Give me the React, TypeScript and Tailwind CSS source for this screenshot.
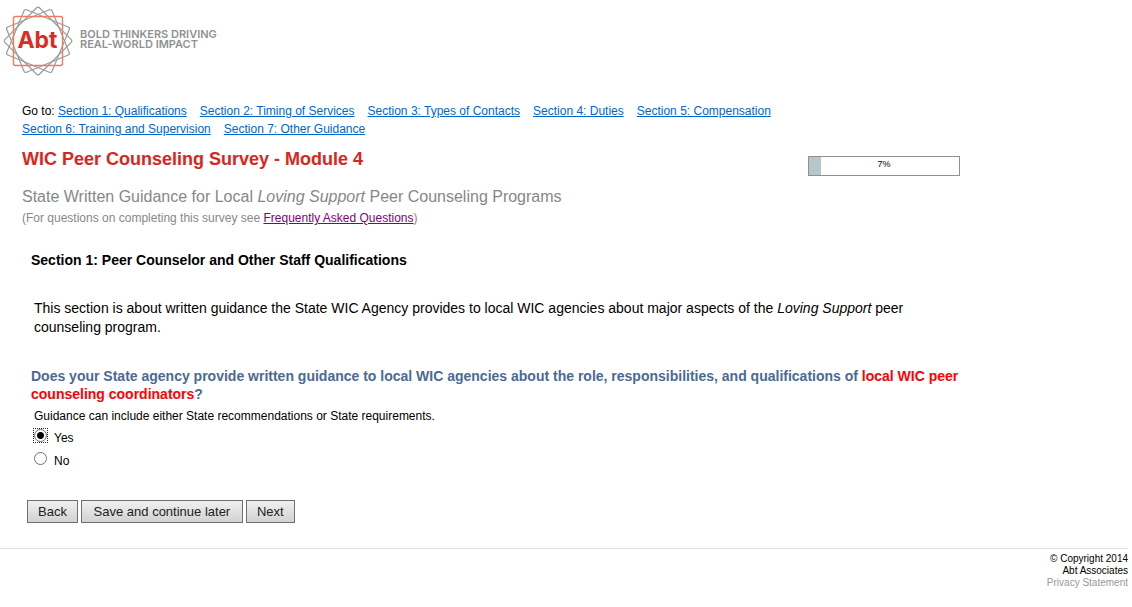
import { useState } from "react";

const sections = [
  "Section 1: Qualifications",
  "Section 2: Timing of Services",
  "Section 3: Types of Contacts",
  "Section 4: Duties",
  "Section 5: Compensation",
  "Section 6: Training and Supervision",
  "Section 7: Other Guidance",
];

function Logo() {
  return (
    <svg width="220" height="80" viewBox="0 0 220 80" role="img" aria-label="Abt: Bold thinkers driving real-world impact">
      <g fill="none" stroke="#9a9d9d" strokeWidth="1.2">
        <rect x="13.5" y="16.5" width="49" height="49" rx="2" transform="rotate(22.5 38 41)" />
        <rect x="13.5" y="16.5" width="49" height="49" rx="2" transform="rotate(45 38 41)" />
        <rect x="13.5" y="16.5" width="49" height="49" rx="2" transform="rotate(67.5 38 41)" />
      </g>
      <rect x="13.5" y="16.5" width="49" height="49" rx="2" fill="none" stroke="#ee7c60" strokeWidth="1.4" />
      <text x="37.5" y="48" textAnchor="middle" fill="#dc2b23" className="font-[Inter,sans-serif] text-[23px] font-bold">Abt</text>
      <g fill="#8f9292" className="font-[Inter,sans-serif] text-[11px] font-semibold">
        <text x="80" y="38">BOLD THINKERS DRIVING</text>
        <text x="80" y="48">REAL-WORLD IMPACT</text>
      </g>
    </svg>
  );
}

function Choice({ label, value, onSelect }: { label: string; value: string; onSelect: (v: string) => void }) {
  const checked = label === value;
  return (
    <label className="flex h-[23px] items-start">
      <span className={"flex size-[15px] shrink-0 items-center justify-center border border-dotted " + (checked ? "border-[#223]" : "border-transparent")}>
        <input
          type="radio"
          name="guidance"
          checked={checked}
          onChange={() => onSelect(label)}
          className={
            "size-[13px] shrink-0 appearance-none rounded-full border border-[#707070] outline-none " +
            (checked ? "bg-[radial-gradient(circle,#000_0_3px,#fff_4px)]" : "bg-white")
          }
        />
      </span>
      <span className="pt-px pl-[6px] text-xs leading-[18px]">{label}</span>
    </label>
  );
}

function FormButton({ children }: { children: string }) {
  return (
    <button
      type="button"
      className="h-[23px] border border-[#707070] bg-linear-to-b from-[#f0f0f0] to-[#d2d2d2] px-[10px] text-[13px] leading-[20px] text-[#222] nth-2:min-w-[162px]"
    >
      {children}
    </button>
  );
}

export default function App() {
  const [answer, setAnswer] = useState("Yes");
  return (
    <div className="bg-white font-['Liberation_Sans',Arial,sans-serif] text-black">
      <header className="h-[102px]">
        <Logo />
      </header>
      <main className="max-w-[960px] pl-[22px]">
        <nav aria-label="Survey sections" className="flex flex-wrap gap-x-[13px] text-xs leading-[18px]">
          {sections.map((s, i) => (
            <span key={s}>
              {i === 0 && "Go to: "}
              <a href="#" className="text-[#0066cc] underline">{s}</a>
            </span>
          ))}
        </nav>
        <div className="mt-[10px] flex items-start justify-between">
          <h1 className="text-lg leading-[22px] font-bold text-[#d9261c]">WIC Peer Counseling Survey - Module 4</h1>
          <div
            role="progressbar"
            aria-label="Survey progress"
            aria-valuenow={7}
            aria-valuemin={0}
            aria-valuemax={100}
            className="mt-2 h-5 w-[152px] border border-[#909090] bg-[linear-gradient(to_right,#b7c5cc_8%,#fff_8%)] pt-px text-center text-[9px] leading-[12px]"
          >
            7%
          </div>
        </div>
        <h2 className="mt-3 text-base leading-[18px] text-[#85888a]">
          State Written Guidance for Local <em>Loving Support</em> Peer Counseling Programs
        </h2>
        <p className="mt-[3px] text-xs leading-[18px] text-[#85888a]">
          (For questions on completing this survey see <a href="#" className="text-[#800080] underline">Frequently Asked Questions</a>)
        </p>
        <h3 className="mt-6 pl-[9px] text-sm leading-[18px] font-bold">Section 1: Peer Counselor and Other Staff Qualifications</h3>
        <p className="mt-[30px] pr-8 pl-3 text-sm leading-[19px]">
          This section is about written guidance the State WIC Agency provides to local WIC agencies about major aspects of the <em>Loving Support</em> peer counseling program.
        </p>
        <fieldset className="mt-[30px]">
          <legend className="pl-[9px] text-sm leading-[18px] font-bold text-[#4a6a94]">
            Does your State agency provide written guidance to local WIC agencies about the role, responsibilities, and qualifications of <span className="text-[#f00]">local WIC peer counseling coordinators</span>?
          </legend>
          <p className="pt-1 pl-3 text-xs leading-[18px]">Guidance can include either State recommendations or State requirements.</p>
          <div className="pt-[3px] pl-[11px]">
            <Choice label="Yes" value={answer} onSelect={setAnswer} />
            <Choice label="No" value={answer} onSelect={setAnswer} />
          </div>
        </fieldset>
        <div className="mt-[26px] flex gap-[3px] pl-[5px]">
          <FormButton>Back</FormButton>
          <FormButton>Save and continue later</FormButton>
          <FormButton>Next</FormButton>
        </div>
      </main>
      <footer className="mt-[25px] mr-1 border-t border-[#ddd] pt-1 text-right text-[10px] leading-[12px]">
        <p>© Copyright 2014</p>
        <p>Abt Associates</p>
        <a href="#" className="block text-[#999]">Privacy Statement</a>
      </footer>
    </div>
  );
}
